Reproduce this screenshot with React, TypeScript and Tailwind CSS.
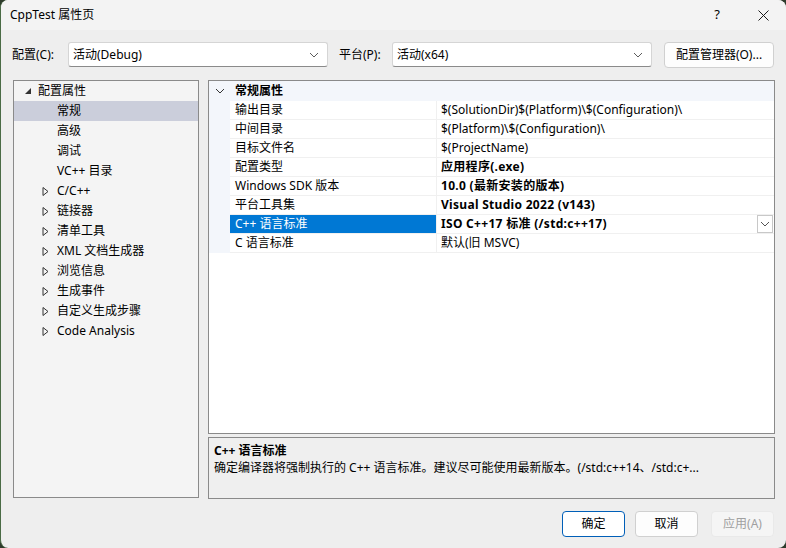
import React from "react";

const font = { fontFamily: '"Noto Sans", "Noto Sans CJK SC", sans-serif' };

type TreeItem = { label: string; depth: 0 | 1; arrow?: "open" | "closed"; selected?: boolean };

const tree: TreeItem[] = [
  { label: "配置属性", depth: 0, arrow: "open" },
  { label: "常规", depth: 1, selected: true },
  { label: "高级", depth: 1 },
  { label: "调试", depth: 1 },
  { label: "VC++ 目录", depth: 1 },
  { label: "C/C++", depth: 1, arrow: "closed" },
  { label: "链接器", depth: 1, arrow: "closed" },
  { label: "清单工具", depth: 1, arrow: "closed" },
  { label: "XML 文档生成器", depth: 1, arrow: "closed" },
  { label: "浏览信息", depth: 1, arrow: "closed" },
  { label: "生成事件", depth: 1, arrow: "closed" },
  { label: "自定义生成步骤", depth: 1, arrow: "closed" },
  { label: "Code Analysis", depth: 1, arrow: "closed" },
];

type Prop = { name: string; value: string; bold?: boolean; selected?: boolean };

const props: Prop[] = [
  { name: "输出目录", value: "$(SolutionDir)$(Platform)\\$(Configuration)\\" },
  { name: "中间目录", value: "$(Platform)\\$(Configuration)\\" },
  { name: "目标文件名", value: "$(ProjectName)" },
  { name: "配置类型", value: "应用程序(.exe)", bold: true },
  { name: "Windows SDK 版本", value: "10.0 (最新安装的版本)", bold: true },
  { name: "平台工具集", value: "Visual Studio 2022 (v143)", bold: true },
  { name: "C++ 语言标准", value: "ISO C++17 标准 (/std:c++17)", bold: true, selected: true },
  { name: "C 语言标准", value: "默认(旧 MSVC)" },
];

function Chevron({ className = "" }: { className?: string }) {
  return (
    <svg width="10" height="6" viewBox="0 0 10 6" className={className}>
      <path d="M1 1 L5 5 L9 1" fill="none" stroke="currentColor" strokeWidth="1" />
    </svg>
  );
}

function Combo({ text, width }: { text: string; width: string }) {
  return (
    <div
      className={`${width} flex h-[25px] items-center justify-between rounded-[3px] border border-[#d5d5d5] border-b-[#8a8a8a] bg-white pl-[4px] pr-[8px]`}
    >
      <span>{text}</span>
      <Chevron className="text-[#5c5c5c]" />
    </div>
  );
}

function TreeArrow({ kind }: { kind: "open" | "closed" }) {
  if (kind === "open") {
    return (
      <svg width="8" height="8" viewBox="0 0 8 8">
        <path d="M7 1 L7 7 L1 7 Z" fill="#333" />
      </svg>
    );
  }
  return (
    <svg width="7" height="9" viewBox="0 0 7 9">
      <path d="M1 0.5 L6 4.5 L1 8.5 Z" fill="none" stroke="#333" strokeWidth="1" />
    </svg>
  );
}

function Button({ label, primary, disabled }: { label: string; primary?: boolean; disabled?: boolean }) {
  return (
    <div
      className={`flex h-[26px] w-[63px] items-center justify-center rounded-[4px] border ${
        primary
          ? "border-[#005fb8] bg-white"
          : disabled
            ? "border-[#e9e9e9] bg-[#f5f5f5] text-[#a0a0a0]"
            : "border-[#d0d0d0] bg-[#fdfdfd]"
      }`}
    >
      {label}
    </div>
  );
}

export default function App() {
  return (
    <div className="h-[548px] w-[786px] bg-[#2e3b2c]" style={font}>
      <div className="flex h-full w-full flex-col overflow-hidden rounded-[8px] border-l border-[#4a6b45] bg-[#eeeeee] text-[12px] text-black">
        {/* title bar */}
        <div className="flex h-[30px] items-center bg-[#f3f3f3] pl-[9px]">
          <span className="flex-1">CppTest 属性页</span>
          <span className="w-[46px] text-center text-[13px]">?</span>
          <span className="flex w-[46px] items-center justify-center">
            <svg width="11" height="11" viewBox="0 0 11 11">
              <path d="M0.5 0.5 L10.5 10.5 M10.5 0.5 L0.5 10.5" stroke="#1a1a1a" strokeWidth="1" />
            </svg>
          </span>
        </div>

        {/* config row */}
        <div className="mt-[12px] flex h-[25px] items-center pl-[11px]">
          <span className="w-[56px]">配置(C):</span>
          <Combo text="活动(Debug)" width="w-[260px]" />
          <span className="ml-[11px] w-[53px]">平台(P):</span>
          <Combo text="活动(x64)" width="w-[260px]" />
          <div className="ml-[12px] flex h-[26px] w-[110px] items-center justify-center rounded-[4px] border border-[#d0d0d0] bg-[#fdfdfd]">
            配置管理器(O)...
          </div>
        </div>

        {/* main */}
        <div className="mt-[13px] flex pl-[12px]">
          <div className="h-[418px] w-[186px] border border-[#8a8a8a] bg-[#f4f4f4]">
            {tree.map((t) => (
              <div
                key={t.label}
                className={`flex h-[20px] items-center ${t.selected ? "bg-[#cbcedb]" : ""}`}
              >
                {t.depth === 0 ? (
                  <>
                    <span className="ml-[10px] flex w-[14px] items-center">
                      {t.arrow && <TreeArrow kind={t.arrow} />}
                    </span>
                    <span>{t.label}</span>
                  </>
                ) : (
                  <>
                    <span className="ml-[28px] flex w-[15px] items-center">
                      {t.arrow && <TreeArrow kind={t.arrow} />}
                    </span>
                    <span>{t.label}</span>
                  </>
                )}
              </div>
            ))}
          </div>

          <div className="ml-[9px] flex w-[567px] flex-col">
            <div className="h-[354px] border border-[#8a8a8a] bg-white">
              <div className="flex h-[20px] items-center bg-[#f3f6fb]">
                <span className="flex w-[21px] justify-center">
                  <Chevron className="text-[#333]" />
                </span>
                <span className="pl-[5px] font-bold">常规属性</span>
              </div>
              <div className="flex">
                <div className="w-[21px] bg-[#f3f6fb]" />
                <div className="flex-1">
                  {props.map((p) => (
                    <div key={p.name} className="flex h-[19px] border-b border-[#f0f0f0]">
                      <div
                        className={`flex w-[207px] items-center border-r border-[#f0f0f0] pl-[5px] ${
                          p.selected ? "bg-[#0078d4] text-white" : ""
                        }`}
                      >
                        {p.name}
                      </div>
                      <div className={`flex flex-1 items-center pl-[4px] ${p.bold ? "font-bold tracking-[0.3px]" : ""}`}>
                        <span className="flex-1">{p.value}</span>
                        {p.selected && (
                          <span className="mr-[1px] flex h-[18px] w-[16px] items-center justify-center border border-[#c8c8c8] bg-white font-normal">
                            <Chevron className="text-[#555]" />
                          </span>
                        )}
                      </div>
                    </div>
                  ))}
                </div>
              </div>
            </div>
            <div className="mt-[3px] h-[62px] border border-[#8a8a8a] bg-[#efefef] px-[5px] pt-[4px]">
              <div className="font-bold leading-[17px]">C++ 语言标准</div>
              <div className="leading-[17px]">
                确定编译器将强制执行的 C++ 语言标准。建议尽可能使用最新版本。(/std:c++14、/std:c+...
              </div>
            </div>
          </div>
        </div>

        {/* buttons */}
        <div className="mt-[12px] flex justify-end gap-[10px] pr-[12px]">
          <Button label="确定" primary />
          <Button label="取消" />
          <div className="ml-[3px]">
            <Button label="应用(A)" disabled />
          </div>
        </div>
      </div>
    </div>
  );
}
